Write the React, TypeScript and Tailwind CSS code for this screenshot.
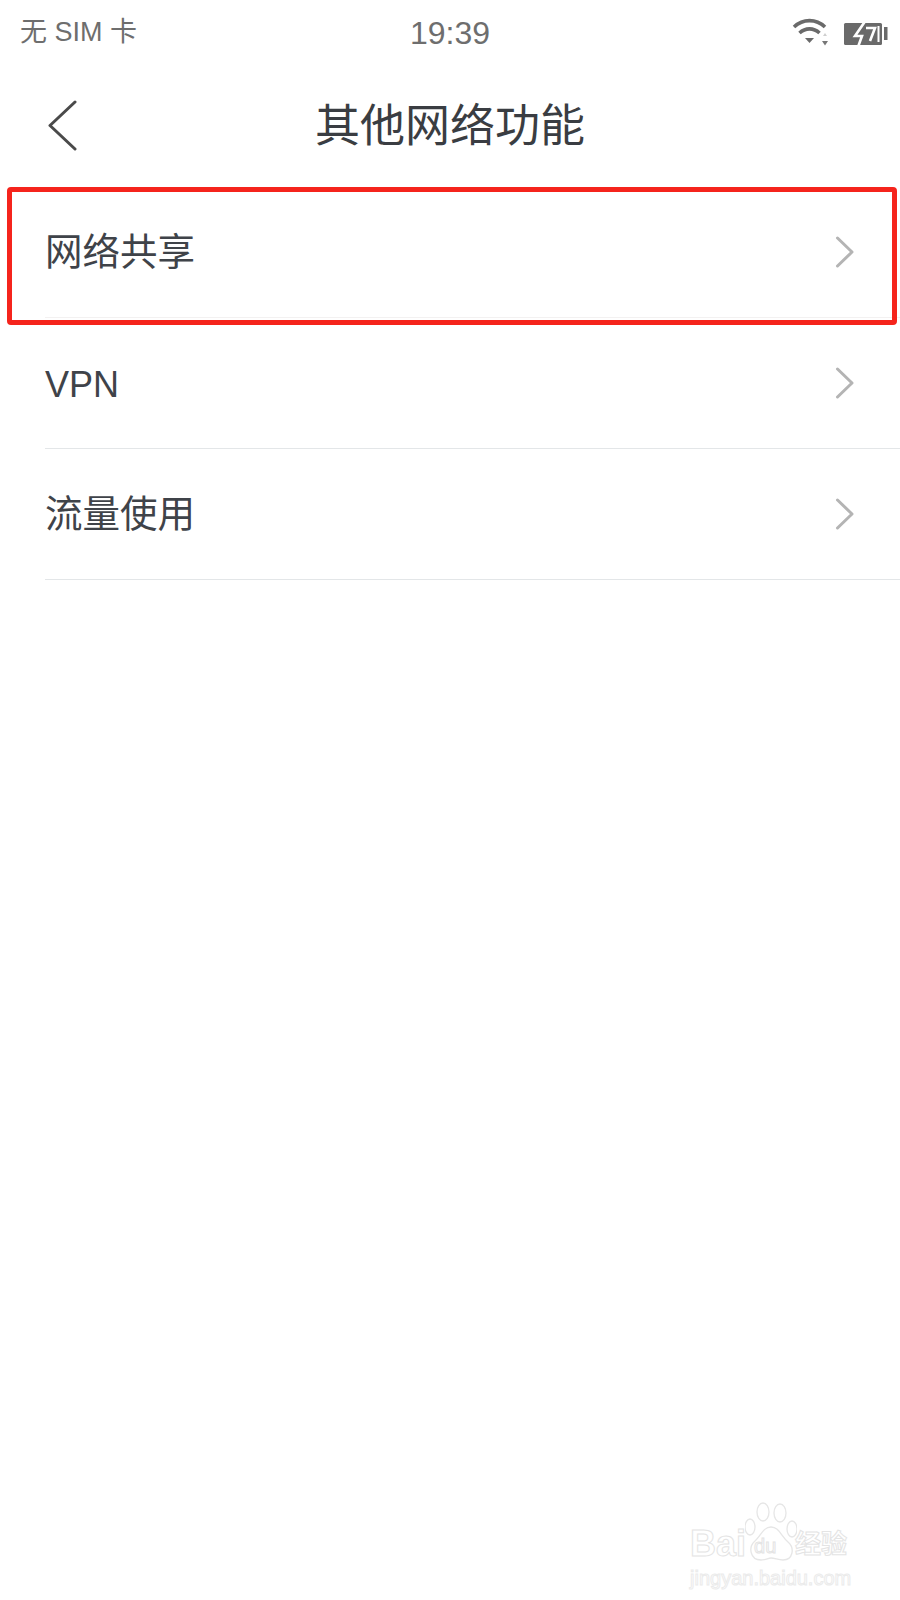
const cjk = "font-['Liberation_Sans','Noto_Sans_CJK_SC',sans-serif]";

function Chevron() {
  return (
    <svg width="20" height="32" viewBox="0 0 20 32" fill="none" className="shrink-0">
      <path d="M2.5 2 L17 16 L2.5 30" stroke="#b4b4b4" strokeWidth="3" strokeLinecap="round" strokeLinejoin="round" />
    </svg>
  );
}

function Row({ label, latin, faint }: { label: string; latin?: boolean; faint?: boolean }) {
  return (
    <div className={`ml-[45px] h-[131px] flex items-center justify-between border-b pr-[45px] ${faint ? "border-[#f3f1f1]" : "border-[#e3e6e8]"}`}>
      <span className={latin ? "pt-[4px] text-[36px] leading-none text-[#3f4349]" : "pt-[2px] text-[37.5px] leading-none text-[#3f4349]"}>
        {label}
      </span>
      <Chevron />
    </div>
  );
}

function Wifi() {
  return (
    <svg width="38" height="30" viewBox="0 0 38 30" fill="none">
      <path d="M2 9 C11 0.5 24 0.5 33 9" stroke="#6a6a6a" strokeWidth="3.6" />
      <path d="M7.5 15 C13.5 9.5 21.5 9.5 27.5 15" stroke="#6a6a6a" strokeWidth="3.6" />
      <path d="M13 20 H22 L17.5 25 Z" fill="#6a6a6a" />
      <path d="M31 18 L33 15 L35 18 Z" fill="#cfcfcf" />
      <path d="M30 23 H36 L33 27.5 Z" fill="#777777" />
    </svg>
  );
}

function Battery() {
  return (
    <svg width="46" height="28" viewBox="0 0 46 28" fill="none">
      <rect x="2" y="4" width="38" height="22" rx="1.5" fill="#6a6a6a" />
      <rect x="42" y="8" width="3.5" height="13" fill="#6a6a6a" />
      {/* charging bolt, white on the cell */}
      <path d="M24 1 L13 17 H20 L16 28" stroke="#ffffff" strokeWidth="2.6" fill="none" />
      <path d="M24 9 H33 L28 22" stroke="#ffffff" strokeWidth="2.6" fill="none" />
      <rect x="35.5" y="7" width="2" height="16" fill="#ffffff" />
    </svg>
  );
}

function Paw() {
  return (
    <svg width="52" height="62" viewBox="0 0 52 62" fill="none" stroke="#e6e6e6" strokeWidth="1.3">
      <ellipse cx="5" cy="25" rx="5" ry="8" />
      <ellipse cx="18" cy="10" rx="6" ry="9" />
      <ellipse cx="35" cy="11" rx="6" ry="9" />
      <ellipse cx="47" cy="27" rx="5" ry="8" />
      <path d="M26 25 C18 25 16 34 10 39 C3 45 5 58 16 58 C21 58 23 56 26 56 C30 56 33 58 38 58 C48 58 50 46 43 40 C36 34 34 25 26 25 Z" />
    </svg>
  );
}

function Watermark() {
  const outline = "text-transparent [-webkit-text-stroke:1px_#e4e4e4]";
  return (
    <div className="absolute left-[690px] top-[1502px] w-[170px] font-['Liberation_Sans','Noto_Sans_CJK_SC',sans-serif]">
      <div className="flex items-end h-[60px]">
        <span className={`text-[36px] leading-[36px] font-bold ${outline}`}>Bai</span>
        <div className="relative w-[50px] h-[60px] shrink-0 -ml-px">
          <Paw />
          <span className={`absolute left-[9px] top-[33px] text-[20px] leading-[22px] ${outline}`}>du</span>
        </div>
        <span className={`text-[26px] leading-[36px] font-bold ${outline}`}>经验</span>
      </div>
      <div className="text-[20px] leading-[22px] mt-[5px] text-transparent [-webkit-text-stroke:1px_#ebebeb]">jingyan.baidu.com</div>
    </div>
  );
}

export default function App() {
  return (
    <div className={`relative w-[900px] h-[1600px] overflow-hidden bg-white ${cjk}`}>
      {/* Status bar */}
      <div className="h-[65px] flex items-center justify-between pl-[20px] pr-[12px]">
        <span className="text-[27px] leading-none text-[#6e6e6e]">无 SIM 卡</span>
        <span className="absolute left-0 right-0 text-center text-[32px] leading-none text-[#6e6e6e]">19:39</span>
        <div className="flex items-center gap-[12px]">
          <Wifi />
          <Battery />
        </div>
      </div>

      {/* Header */}
      <div className="relative h-[122px] flex items-center justify-center">
        <svg width="30" height="52" viewBox="0 0 30 52" fill="none" className="absolute left-[48px] top-[35px]">
          <path d="M27 2 L2 25.5 L27 49" stroke="#4a4a4a" strokeWidth="3" strokeLinecap="round" strokeLinejoin="round" />
        </svg>
        <span className="text-[45px] leading-none text-[#3a3d42]">其他网络功能</span>
      </div>

      {/* List */}
      <div>
        <Row label="网络共享" faint />
        <Row label="VPN" latin />
        <Row label="流量使用" />
      </div>

      {/* Red highlight drawn over the first row */}
      <div className="absolute left-[7px] top-[187px] w-[890px] h-[138px] border-[5px] border-[#f5241c] rounded-[4px]" />

      <Watermark />
    </div>
  );
}
